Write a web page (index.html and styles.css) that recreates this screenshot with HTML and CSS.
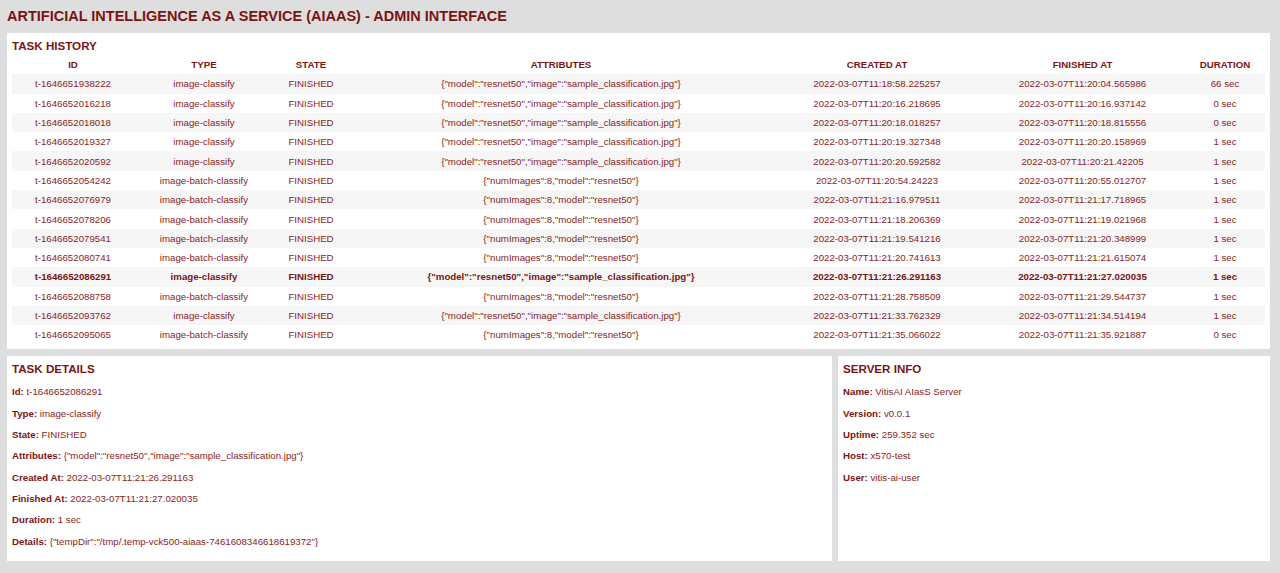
FILE: index.html
```html
<!DOCTYPE html>
<html>
<head>
<meta charset="utf-8">
<link rel="stylesheet" href="styles.css">
</head>
<body>
<h1 class="title">ARTIFICIAL INTELLIGENCE AS A SERVICE (AIAAS) - ADMIN INTERFACE</h1>
<section class="panel history">
  <h2 class="heading">TASK HISTORY</h2>
  <table class="tasks">
    <colgroup>
      <col class="c-id"><col class="c-type"><col class="c-state"><col class="c-attr"><col class="c-created"><col class="c-finished"><col class="c-dur">
    </colgroup>
    <thead>
      <tr><th>ID</th><th>TYPE</th><th>STATE</th><th>ATTRIBUTES</th><th>CREATED AT</th><th>FINISHED AT</th><th>DURATION</th></tr>
    </thead>
    <tbody>
      <tr><td>t-1646651938222</td><td>image-classify</td><td>FINISHED</td><td>{"model":"resnet50","image":"sample_classification.jpg"}</td><td>2022-03-07T11:18:58.225257</td><td>2022-03-07T11:20:04.565986</td><td>66 sec</td></tr>
      <tr><td>t-1646652016218</td><td>image-classify</td><td>FINISHED</td><td>{"model":"resnet50","image":"sample_classification.jpg"}</td><td>2022-03-07T11:20:16.218695</td><td>2022-03-07T11:20:16.937142</td><td>0 sec</td></tr>
      <tr><td>t-1646652018018</td><td>image-classify</td><td>FINISHED</td><td>{"model":"resnet50","image":"sample_classification.jpg"}</td><td>2022-03-07T11:20:18.018257</td><td>2022-03-07T11:20:18.815556</td><td>0 sec</td></tr>
      <tr><td>t-1646652019327</td><td>image-classify</td><td>FINISHED</td><td>{"model":"resnet50","image":"sample_classification.jpg"}</td><td>2022-03-07T11:20:19.327348</td><td>2022-03-07T11:20:20.158969</td><td>1 sec</td></tr>
      <tr><td>t-1646652020592</td><td>image-classify</td><td>FINISHED</td><td>{"model":"resnet50","image":"sample_classification.jpg"}</td><td>2022-03-07T11:20:20.592582</td><td>2022-03-07T11:20:21.42205</td><td>1 sec</td></tr>
      <tr><td>t-1646652054242</td><td>image-batch-classify</td><td>FINISHED</td><td>{"numImages":8,"model":"resnet50"}</td><td>2022-03-07T11:20:54.24223</td><td>2022-03-07T11:20:55.012707</td><td>1 sec</td></tr>
      <tr><td>t-1646652076979</td><td>image-batch-classify</td><td>FINISHED</td><td>{"numImages":8,"model":"resnet50"}</td><td>2022-03-07T11:21:16.979511</td><td>2022-03-07T11:21:17.718965</td><td>1 sec</td></tr>
      <tr><td>t-1646652078206</td><td>image-batch-classify</td><td>FINISHED</td><td>{"numImages":8,"model":"resnet50"}</td><td>2022-03-07T11:21:18.206369</td><td>2022-03-07T11:21:19.021968</td><td>1 sec</td></tr>
      <tr><td>t-1646652079541</td><td>image-batch-classify</td><td>FINISHED</td><td>{"numImages":8,"model":"resnet50"}</td><td>2022-03-07T11:21:19.541216</td><td>2022-03-07T11:21:20.348999</td><td>1 sec</td></tr>
      <tr><td>t-1646652080741</td><td>image-batch-classify</td><td>FINISHED</td><td>{"numImages":8,"model":"resnet50"}</td><td>2022-03-07T11:21:20.741613</td><td>2022-03-07T11:21:21.615074</td><td>1 sec</td></tr>
      <tr class="selected"><td>t-1646652086291</td><td>image-classify</td><td>FINISHED</td><td>{"model":"resnet50","image":"sample_classification.jpg"}</td><td>2022-03-07T11:21:26.291163</td><td>2022-03-07T11:21:27.020035</td><td>1 sec</td></tr>
      <tr><td>t-1646652088758</td><td>image-batch-classify</td><td>FINISHED</td><td>{"numImages":8,"model":"resnet50"}</td><td>2022-03-07T11:21:28.758509</td><td>2022-03-07T11:21:29.544737</td><td>1 sec</td></tr>
      <tr><td>t-1646652093762</td><td>image-classify</td><td>FINISHED</td><td>{"model":"resnet50","image":"sample_classification.jpg"}</td><td>2022-03-07T11:21:33.762329</td><td>2022-03-07T11:21:34.514194</td><td>1 sec</td></tr>
      <tr><td>t-1646652095065</td><td>image-batch-classify</td><td>FINISHED</td><td>{"numImages":8,"model":"resnet50"}</td><td>2022-03-07T11:21:35.066022</td><td>2022-03-07T11:21:35.921887</td><td>0 sec</td></tr>
    </tbody>
  </table>
</section>
<div class="bottom">
  <section class="panel details">
    <h2 class="heading">TASK DETAILS</h2>
    <p class="line"><b>Id:</b> t-1646652086291</p>
    <p class="line"><b>Type:</b> image-classify</p>
    <p class="line"><b>State:</b> FINISHED</p>
    <p class="line"><b>Attributes:</b> {"model":"resnet50","image":"sample_classification.jpg"}</p>
    <p class="line"><b>Created At:</b> 2022-03-07T11:21:26.291163</p>
    <p class="line"><b>Finished At:</b> 2022-03-07T11:21:27.020035</p>
    <p class="line"><b>Duration:</b> 1 sec</p>
    <p class="line"><b>Details:</b> {"tempDir":"/tmp/.temp-vck500-aiaas-7461608346618619372"}</p>
  </section>
  <section class="panel server">
    <h2 class="heading">SERVER INFO</h2>
    <p class="line"><b>Name:</b> VitisAI AIasS Server</p>
    <p class="line"><b>Version:</b> v0.0.1</p>
    <p class="line"><b>Uptime:</b> 259.352 sec</p>
    <p class="line"><b>Host:</b> x570-test</p>
    <p class="line"><b>User:</b> vitis-ai-user</p>
  </section>
</div>
</body>
</html>
```
FILE: styles.css
```css
html, body {
  margin: 0;
  padding: 0;
}
body {
  background: #dedede;
  font-family: "Liberation Sans", Arial, sans-serif;
  color: #8a2424;
  padding: 7px 10px 12px 7px;
  font-size: 9.7px;
}
.title {
  margin: 0 0 8px 0;
  font-size: 14.5px;
  line-height: 18px;
  font-weight: bold;
  color: #7a1414;
}
.panel {
  background: #ffffff;
  padding: 4px 5px 5px 5px;
}
.heading {
  margin: 0;
  font-size: 11.6px;
  line-height: 17px;
  font-weight: bold;
  color: #7a1414;
}
.tasks {
  width: 1253px;
  border-collapse: collapse;
  table-layout: fixed;
}
.c-id { width: 122px; }
.c-type { width: 140px; }
.c-state { width: 74px; }
.c-attr { width: 426px; }
.c-created { width: 206px; }
.c-finished { width: 205px; }
.c-dur { width: 80px; }
.tasks th, .tasks td {
  padding: 0;
  height: 19.3px;
  text-align: center;
  white-space: nowrap;
  font-size: 9.7px;
}
.tasks thead th {
  height: 20.3px;
  font-weight: bold;
  color: #7a1414;
}
.tasks tbody tr:nth-child(odd) {
  background: #f6f6f6;
}
.tasks tr.selected td {
  font-weight: bold;
  color: #7a1414;
}
.bottom {
  display: flex;
  gap: 6px;
  margin-top: 7px;
}
.details {
  width: 815px;
  padding-top: 5px;
  padding-bottom: 9px;
}
.server {
  flex: 1;
  padding-top: 5px;
}
.bottom .heading {
  line-height: 16px;
  margin-bottom: 4px;
}
.line {
  margin: 0;
  line-height: 21.33px;
  font-size: 9.7px;
}
.line b {
  color: #7a1414;
}
```
